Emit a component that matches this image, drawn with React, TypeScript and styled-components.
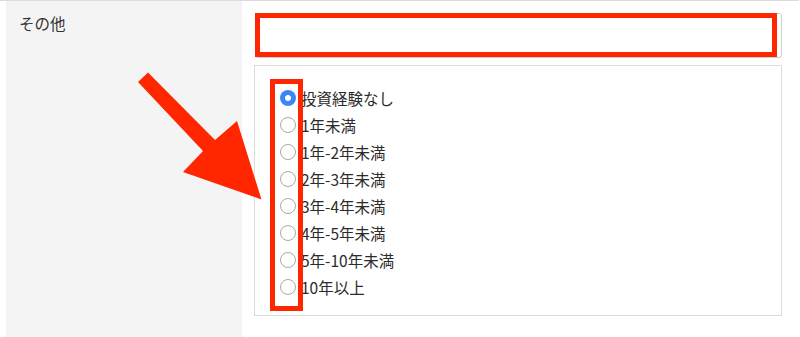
import React from 'react';
import styled, { createGlobalStyle } from 'styled-components';

const GlobalStyle = createGlobalStyle`
  body {
    margin: 0;
    background: #fff;
    font-family: "Noto Sans CJK JP", "Noto Sans", sans-serif;
    color: #333;
  }
`;

const Page = styled.div`
  position: relative;
  width: 800px;
  height: 337px;
  overflow: hidden;
`;

const FormRow = styled.div`
  display: flex;
  width: 793px;
  height: 336px;
  border-top: 1px solid #dcdcdc;
  padding-left: 6px;
  box-sizing: content-box;
`;

const LabelCell = styled.div`
  width: 236px;
  box-sizing: border-box;
  padding: 12px 13px;
  background: #f4f4f4;
  font-size: 15.5px;
  line-height: 20px;
  color: #333;
`;

const ValueCell = styled.div`
  display: flex;
  flex-direction: column;
  gap: 7px;
  padding: 12px 0 0 12px;
`;

const TextInputWrap = styled.div`
  position: relative;
  margin-left: 1px;
  width: 527px;
  height: 45px;
`;

const TextInput = styled.input`
  width: 100%;
  height: 100%;
  box-sizing: border-box;
  border: 1px solid #cfcfcf;
  border-radius: 3px;
  background: #fff;
  outline: none;
`;

const Highlight = styled.div<{ $top: number; $left: number; $w: number; $h: number }>`
  position: absolute;
  top: ${({ $top }) => $top}px;
  left: ${({ $left }) => $left}px;
  width: ${({ $w }) => $w}px;
  height: ${({ $h }) => $h}px;
  box-sizing: border-box;
  border: 5.5px solid #ff2600;
  pointer-events: none;
`;

const RadioBox = styled.div`
  position: relative;
  width: 528px;
  box-sizing: border-box;
  border: 1px solid #dcdcdc;
  padding: 19px 0 15px 25px;
`;

const RadioRow = styled.label`
  display: flex;
  align-items: center;
  height: 26.9px;
  font-size: 15.5px;
  color: #2b2b2b;
`;

const Radio = styled.input`
  appearance: none;
  margin: 0 5px 0 0;
  width: 16px;
  height: 16px;
  border-radius: 50%;
  box-sizing: border-box;
  border: 1px solid #a9a9a9;
  background: #fff;
  flex: none;

  &:checked {
    border: none;
    background: radial-gradient(circle, #fff 0 2.7px, #3b86f7 3.2px);
  }
`;

const options = [
  '投資経験なし',
  '1年未満',
  '1年-2年未満',
  '2年-3年未満',
  '3年-4年未満',
  '4年-5年未満',
  '5年-10年未満',
  '10年以上',
];

const Arrow = styled.svg`
  position: absolute;
  left: 0;
  top: 0;
  pointer-events: none;
`;

export default function App() {
  return (
    <Page>
      <GlobalStyle />
      <FormRow>
        <LabelCell>その他</LabelCell>
        <ValueCell>
          <TextInputWrap>
            <TextInput type="text" />
            <Highlight $top={0} $left={0} $w={522} $h={44} />
          </TextInputWrap>
          <RadioBox>
            {options.map((o, i) => (
              <RadioRow key={o}>
                <Radio type="radio" name="exp" defaultChecked={i === 0} />
                {o}
              </RadioRow>
            ))}
            <Highlight $top={13} $left={15} $w={33} $h={232} />
          </RadioBox>
        </ValueCell>
      </FormRow>
      <Arrow width="800" height="337" viewBox="0 0 800 337">
        <polygon
          points="138,82 148,72.5 215,140 237,121 261.5,199.5 183,172 203,151"
          fill="#ff2600"
        />
      </Arrow>
    </Page>
  );
}
